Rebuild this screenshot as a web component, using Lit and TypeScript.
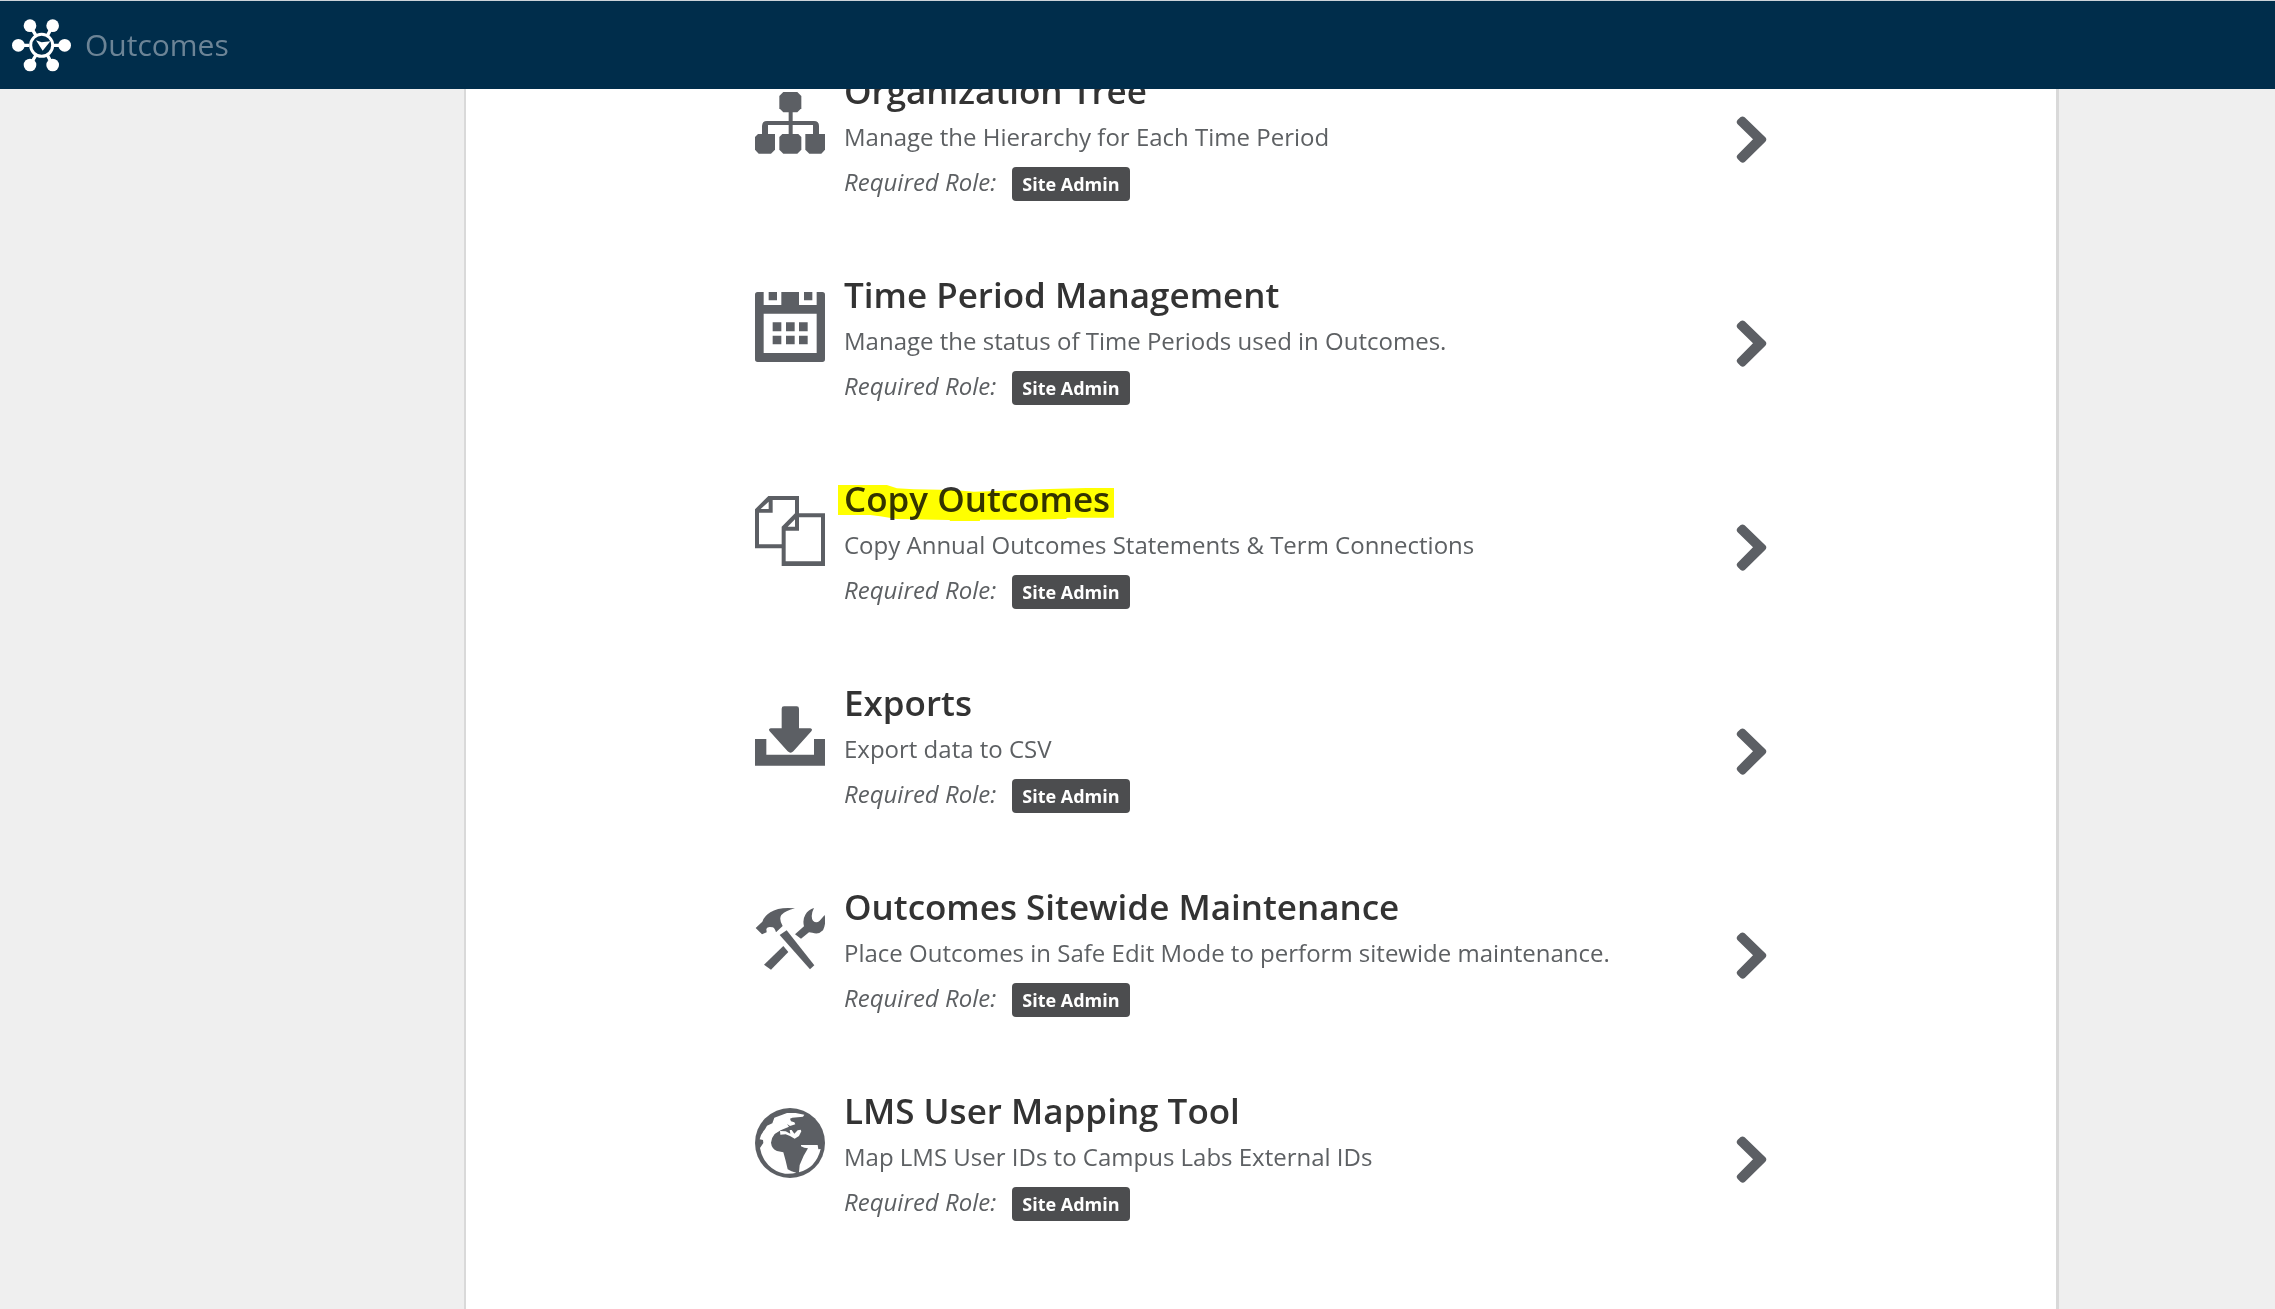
import { LitElement, html, svg, css, nothing } from "lit";
import type { SVGTemplateResult } from "lit";
import { customElement, property } from "lit/decorators.js";

interface Tool {
  icon: string;
  title: string;
  text: string;
  role: string;
  marked?: boolean;
}

const TOOLS: Tool[] = [
  { icon: "tree", title: "Organization Tree", text: "Manage the Hierarchy for Each Time Period", role: "Site Admin" },
  { icon: "calendar", title: "Time Period Management", text: "Manage the status of Time Periods used in Outcomes.", role: "Site Admin" },
  { icon: "copy", title: "Copy Outcomes", text: "Copy Annual Outcomes Statements & Term Connections", role: "Site Admin", marked: true },
  { icon: "download", title: "Exports", text: "Export data to CSV", role: "Site Admin" },
  { icon: "tools", title: "Outcomes Sitewide Maintenance", text: "Place Outcomes in Safe Edit Mode to perform sitewide maintenance.", role: "Site Admin" },
  { icon: "globe", title: "LMS User Mapping Tool", text: "Map LMS User IDs to Campus Labs External IDs", role: "Site Admin" },
];

/* All icons are drawn on a 210 x 210 grid. */
const ICONS: Record<string, SVGTemplateResult> = {
  tree: svg`
    <path d="M85 12h42l12 12v37l-12 12h-42l-12 -12v-37z"/>
    <path d="M101 70h12v29h64q15 0 15 15v28h-18v-31h-61v30h-12v-30h-62v31h-18v-28q0 -15 15 -15h65z"/>
    <path d="M9 138h51v47l-12 12h-37l-11 -12v-38z"/>
    <path d="M82 138h48l9 9v38l-12 12h-42l-12 -12v-38z"/>
    <path d="M151 138h59v47l-11 12h-36l-12 -12z"/>`,
  calendar: svg`
    <path fill-rule="evenodd" d="M8 0h18v39h53v-39h53v39h53v-39h17q8 0 8 8v194q0 8 -8 8h-194q-8 0 -8 -8v-194q0 -8 8 -8zM26 65v118h159v-118z"/>
    <path d="M41 0h25v25h-25zM147 0h25v25h-25zM53 91h26v27h-26zM93 91h26v27h-26zM132 91h26v27h-26zM53 131h26v26h-26zM93 131h26v26h-26zM132 131h26v26h-26z"/>`,
  copy: svg`
    <path fill-rule="evenodd" d="M40 0h92v52h78v158h-130v-53h-80v-117zM53 12v38h-41v95h68v-53l40 -40v-40zM132 64v40h-40v92h106v-132zM41 17l-24 22h24zM120 70l-22 22h22z"/>`,
  download: svg`
    <path d="M87 19h38q7 0 7 7v59h34q8 2 3 9l-54 60q-8 8 -17 0l-54 -60q-5 -7 3 -9h33v-59q0 -7 7 -7z"/>
    <path d="M0 117h34v47h143v-47h33v80h-210z"/>`,
  tools: svg`
    <path d="M2 72l20 -19q6 -17 24 -28q26 -17 74 -12q-27 6 -41 20q-8 13 4 33l-20 19q-4 -13 -10 -15q-16 -4 -19 5l1 10l-14 6z"/>
    <path d="M74 93l21 -14l83 105l-13 12z"/>
    <path d="M85 126l15 18l-52 53l-21 -15z"/>
    <path d="M120 91l27 -24q-5 -20 4 -35q9 -15 26 -20q-12 23 -3 38q10 10 20 0l15 -17q5 25 -5 46q-13 14 -32 7l-10 -1l-24 19z"/>`,
  globe: svg`
    <circle cx="105" cy="105" r="105"/>
    <path fill="#fff" d="M96 15L122 15L148 20L144 26L112 29L105 32L108 40L118 43L121 49L105 54L96 48L102 56L77 67L59 78Q50 88 48 104Q50 122 66 129L85 133L92 158L98 184Q108 191 124 194Q112 198 90 197Q60 192 40 171Q20 150 15 120L25 105L24 96L14 94Q16 80 30 64L36 53L52 46L58 29Z"/>
    <path fill="#fff" d="M75 69L92 70L106 77L104 66L110 66L118 77L128 67L137 65L139 70L132 84L119 92L105 84L92 79L76 80Z"/>
    <path fill="#fff" d="M138 111H188L190 124L197 123Q191 150 172 171Q157 186 132 193L134 171L146 143L159 121L148 119L138 115Z"/>`,
};

@customElement("tool-row")
export class ToolRow extends LitElement {
  @property({ attribute: false }) tool!: Tool;

  static styles = css`
    :host {
      display: block;
    }
    .row {
      display: flex;
      align-items: flex-start;
      gap: 19px;
      color: #5d6063;
      text-decoration: none;
    }
    .icon {
      flex: none;
      width: 70px;
      height: 70px;
      margin-top: 21px;
      fill: #5c5f64;
    }
    .body {
      flex: 1;
      min-width: 0;
    }
    .title {
      position: relative;
      width: fit-content;
      margin: 0;
      color: #333;
      font-size: 35px;
      font-weight: 600;
      line-height: 48px;
    }
    .marker {
      position: absolute;
      left: -6px;
      top: 10px;
      width: calc(100% + 10px);
      height: 36px;
      fill: #ff0;
      mix-blend-mode: multiply;
    }
    .text {
      margin: 0;
      font-size: 24px;
      line-height: 44px;
    }
    .role {
      display: flex;
      align-items: baseline;
      gap: 16px;
      height: 46px;
      margin: 0;
      font-size: 24px;
      line-height: 46px;
    }
    .badge {
      padding: 0 10px;
      border-radius: 4px;
      background: #4c4d4f;
      color: #fff;
      font-size: 18px;
      font-weight: 700;
      line-height: 34px;
    }
    .arrow {
      flex: none;
      width: 31px;
      height: 47px;
      margin-top: 49px;
      fill: #5c5f64;
    }
  `;

  render() {
    const { icon, title, text, role, marked } = this.tool;
    return html`
      <a class="row" href="#">
        <svg class="icon" viewBox="0 0 210 210" aria-hidden="true">${ICONS[icon]}</svg>
        <div class="body">
          <h2 class="title">
            ${title}
            ${marked
              ? html`<svg class="marker" viewBox="0 0 825 108" preserveAspectRatio="none" aria-hidden="true">
                  <path d="M0 0H146L176 10L226 13L346 15L406 20L496 17L606 13L741 9H825V98H686L681 102L576 104H424V108H334V105L176 102L126 94L96 90H0Z" />
                </svg>`
              : nothing}
          </h2>
          <p class="text">${text}</p>
          <p class="role"><em>Required Role:</em><span class="badge">${role}</span></p>
        </div>
        <svg class="arrow" viewBox="0 0 93 141" aria-hidden="true">
          <path d="M14 3Q20 -1 26 4L88 64Q94 70 88 77L27 137Q21 143 14 138L5 129Q-1 122 5 116L51 70L5 25Q-1 18 5 11Z" />
        </svg>
      </a>
    `;
  }
}

@customElement("app-root")
export class AppRoot extends LitElement {
  static styles = css`
    :host {
      display: flex;
      flex-direction: column;
      height: 100vh;
      overflow: hidden;
      background: #efefef;
      font-family: "Open Sans", "Noto Sans", sans-serif;
    }
    .bar {
      position: relative;
      z-index: 1;
      flex: none;
      display: flex;
      align-items: center;
      box-sizing: border-box;
      height: 89px;
      padding: 0 12px;
      border-top: 1px solid #ccd3d9;
      background: #002d4b;
    }
    .brand {
      display: flex;
      align-items: center;
      gap: 14px;
      color: #6c8496;
      font-size: 30px;
      line-height: 40px;
      text-decoration: none;
    }
    .logo {
      width: 59px;
      height: 53px;
    }
    .page {
      flex: 1;
      min-height: 0;
      display: grid;
      grid-template-columns: 464fr 1595fr 216fr;
    }
    .panel {
      grid-column: 2;
      box-sizing: border-box;
      min-height: 0;
      padding: 0 32px;
      border: solid #d9d9d9;
      border-width: 0 3px 0 2px;
      background: #fff;
    }
    .list {
      display: flex;
      flex-direction: column;
      gap: 66px;
      max-width: 1012px;
      margin: -22px auto 0;
      padding: 0;
      list-style: none;
    }
  `;

  render() {
    return html`
      <header class="bar">
        <a class="brand" href="#">
          <svg class="logo" viewBox="0 0 177 159" aria-hidden="true">
            <g fill="none" stroke="#fff">
              <path stroke-width="10" d="M54 20L72 50M122 20L106 50M20 79H52M126 79H158M54 138L72 108M122 138L106 108" />
              <circle cx="89" cy="79" r="33" stroke-width="9" />
            </g>
            <g fill="#fff">
              <circle cx="54" cy="20" r="19" />
              <circle cx="122" cy="20" r="19" />
              <circle cx="19" cy="79" r="19" />
              <circle cx="158" cy="79" r="19" />
              <circle cx="54" cy="138" r="19" />
              <circle cx="122" cy="138" r="19" />
              <path d="M72 64L89 70L115 67L92 95Z" />
            </g>
          </svg>
          <span>Outcomes</span>
        </a>
      </header>
      <div class="page">
        <main class="panel">
          <ul class="list">
            ${TOOLS.map((tool) => html`<li><tool-row .tool=${tool}></tool-row></li>`)}
          </ul>
        </main>
      </div>
    `;
  }
}
